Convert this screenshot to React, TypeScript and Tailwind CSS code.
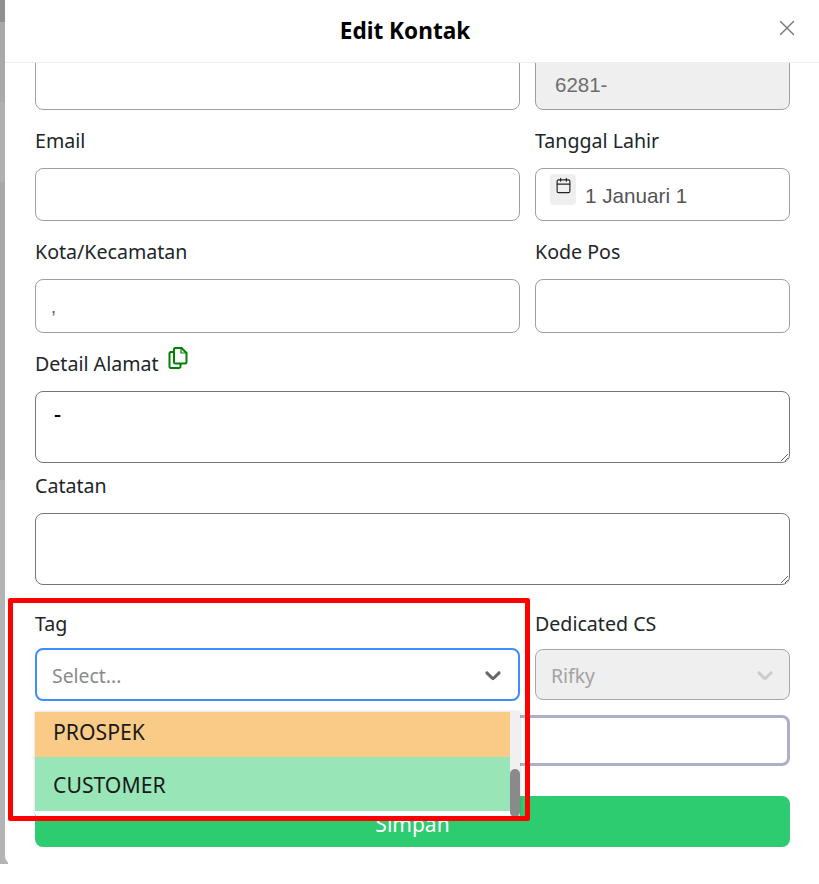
import { Calendar, X } from "lucide-react";

const LABEL = "block text-[19.6px] leading-[26px] text-[#212529]";
const INPUT = "block w-full rounded-lg border border-[#a0a0a0] outline-none";

function Chevron({ className }: { className: string }) {
  return (
    <svg viewBox="0 0 20 20" width="26" height="26" fill="currentColor" className={className}>
      <path d="M4.516 7.548c0.436-0.446 1.043-0.481 1.576 0l3.908 3.747 3.908-3.747c0.533-0.481 1.141-0.446 1.576 0 0.436 0.445 0.408 1.197 0 1.615-0.406 0.418-4.695 4.502-4.695 4.502-0.217 0.223-0.502 0.335-0.789 0.335s-0.572-0.112-0.789-0.335c0 0-4.287-4.084-4.695-4.502s-0.436-1.17 0-1.615z" />
    </svg>
  );
}

function CopyIcon() {
  return (
    <svg viewBox="0 0 20 22" width="20" height="22" fill="none" stroke="#008000" strokeWidth="2" className="mt-[-4px] ml-[9px]">
      <path d="M7.5 1h6l5 5v9a1.5 1.5 0 0 1-1.5 1.5H7.5A1.5 1.5 0 0 1 6 15V2.5A1.5 1.5 0 0 1 7.5 1z" />
      <path d="M13 1v5h5.5" strokeWidth="1.2" />
      <path d="M6 5H3a1.5 1.5 0 0 0-1.5 1.5v13A1.5 1.5 0 0 0 3 21h8a1.5 1.5 0 0 0 1.5-1.5v-3" />
    </svg>
  );
}

export default function App() {
  return (
    <div className="relative h-[884px] w-[819px] overflow-hidden bg-white font-['Noto_Sans',sans-serif]">
      <div className="flex h-[864px]">
        {/* Page behind the modal */}
        <div className="flex w-[8px] shrink-0 flex-col bg-[#b4b4b4]">
          <div className="h-[22px] bg-[#8f8f8f]" />
          <div className="h-[80px] bg-[#a9a9a9]" />
          <div className="h-[80px] bg-[#b1b1b1]" />
          <div className="h-[298px] bg-[#a8a8a8]" />
          <div className="flex-1 bg-[#b4b4b4]" />
        </div>

        {/* Modal */}
        <div className="relative -ml-[3px] flex min-w-0 flex-1 flex-col rounded-l-lg bg-white">
          <div className="relative flex h-[63px] shrink-0 items-center justify-center border-b border-[#eeeeee] bg-white pr-[14px]">
            <h1 className="text-[22.6px] leading-none font-bold text-black">Edit Kontak</h1>
            <X size={26} strokeWidth={1.3} className="absolute top-[15px] right-[19px] text-[#7a7a7a]" />
          </div>

          <div className="flex-1 overflow-hidden pl-[30px]">
            <div className="-mt-[10px] grid w-[755px] grid-cols-[485px_255px] gap-x-[15px]">
              <input className={`${INPUT} h-[57px] bg-white`} readOnly />
              <input
                className={`${INPUT} h-[57px] bg-[#efefef] px-[19px] pt-[6px] font-['Liberation_Sans',sans-serif] text-[20.5px] text-[#6d6d6d]`}
                readOnly
                defaultValue="6281-"
              />

              <label className={`${LABEL} mt-[18px]`}>Email</label>
              <label className={`${LABEL} mt-[18px]`}>Tanggal Lahir</label>
              <input className={`${INPUT} mt-[14px] h-[53px] bg-white`} readOnly />
              <div className={`${INPUT} mt-[14px] flex h-[53px] items-start bg-white pt-[5px] pl-[14px]`}>
                <span className="flex h-[31px] w-[26px] justify-center rounded bg-[#efefef] pt-[3px] text-[#222222]">
                  <Calendar size={17} strokeWidth={1.6} />
                </span>
                <span className="mt-[9px] ml-[9px] font-['Liberation_Sans',sans-serif] text-[20.7px] leading-[26px] text-[#555555]">
                  1 Januari 1
                </span>
              </div>

              <label className={`${LABEL} mt-[18px]`}>Kota/Kecamatan</label>
              <label className={`${LABEL} mt-[18px]`}>Kode Pos</label>
              <input
                className={`${INPUT} mt-[14px] h-[54px] bg-white px-[15px] pt-[2px] font-['Liberation_Sans',sans-serif] text-[18px] text-[#555555]`}
                readOnly
                defaultValue=","
              />
              <input className={`${INPUT} mt-[14px] h-[54px] bg-white`} readOnly />

              <label className={`${LABEL} col-span-2 mt-[18px] flex items-start`}>
                Detail Alamat
                <CopyIcon />
              </label>
              <textarea
                className="col-span-2 mt-[14px] block h-[72px] w-full rounded-lg border border-[#767676] bg-white px-[18px] py-[8px] text-[22px] leading-[27px] font-medium text-black outline-none"
                readOnly
                defaultValue="-"
              />

              <label className={`${LABEL} col-span-2 mt-[10px]`}>Catatan</label>
              <textarea
                className="col-span-2 mt-[14px] block h-[72px] w-full rounded-lg border border-[#767676] bg-white outline-none"
                readOnly
              />

              <label className={`${LABEL} mt-[26px]`}>Tag</label>
              <label className={`${LABEL} mt-[26px]`}>Dedicated CS</label>

              <div className="mt-[11px] flex h-[53px] items-center justify-between rounded-lg border-2 border-[#3f8cff] bg-white pr-[12px] pl-[15px]">
                <span className="pt-[3px] text-[19.4px] text-[#8a8a8a]">Select...</span>
                <Chevron className="text-[#666666]" />
              </div>
              <div className="mt-[12px] flex h-[51px] items-center justify-between rounded-lg border border-[#a8a8a8] bg-[#efefef] pr-[11px] pl-[15px]">
                <span className="pt-[3px] text-[19.4px] text-[#a3a3a3]">Rifky</span>
                <Chevron className="text-[#cccccc]" />
              </div>

              <div className="col-span-2 mt-[14px] h-[51px] rounded-lg border-[3px] border-[#aeaec8] bg-white" />

              <button className="col-span-2 mt-[30px] h-[51px] rounded-lg bg-[#2ecc71] pt-[6px] text-[21px] text-white">
                Simpan
              </button>
            </div>
          </div>
        </div>
      </div>

      {/* Open tag dropdown */}
      <div className="absolute top-[712px] left-[35px] flex h-[105px] w-[485px] overflow-hidden rounded-b bg-white shadow-[0_0_3px_rgba(0,0,0,0.2)]">
        <div className="flex-1 text-[21.2px] text-[#1a1a1a]">
          <div className="flex h-[45px] items-center bg-[#f9cb87] px-[18px] pb-[6px]">PROSPEK</div>
          <div className="flex h-[54px] items-center bg-[#98e6b8] px-[18px] pt-[2px]">CUSTOMER</div>
        </div>
        <div className="relative w-[10px] bg-[#f0f0f0]">
          <div className="absolute top-[57px] left-0 h-[48px] w-[10px] rounded-full bg-[#8a8a8a]" />
        </div>
      </div>

      {/* Annotation box */}
      <div className="pointer-events-none absolute top-[598px] left-[8px] h-[223px] w-[522px] rounded-[2px] border-[5px] border-[#ff0000]" />
    </div>
  );
}
